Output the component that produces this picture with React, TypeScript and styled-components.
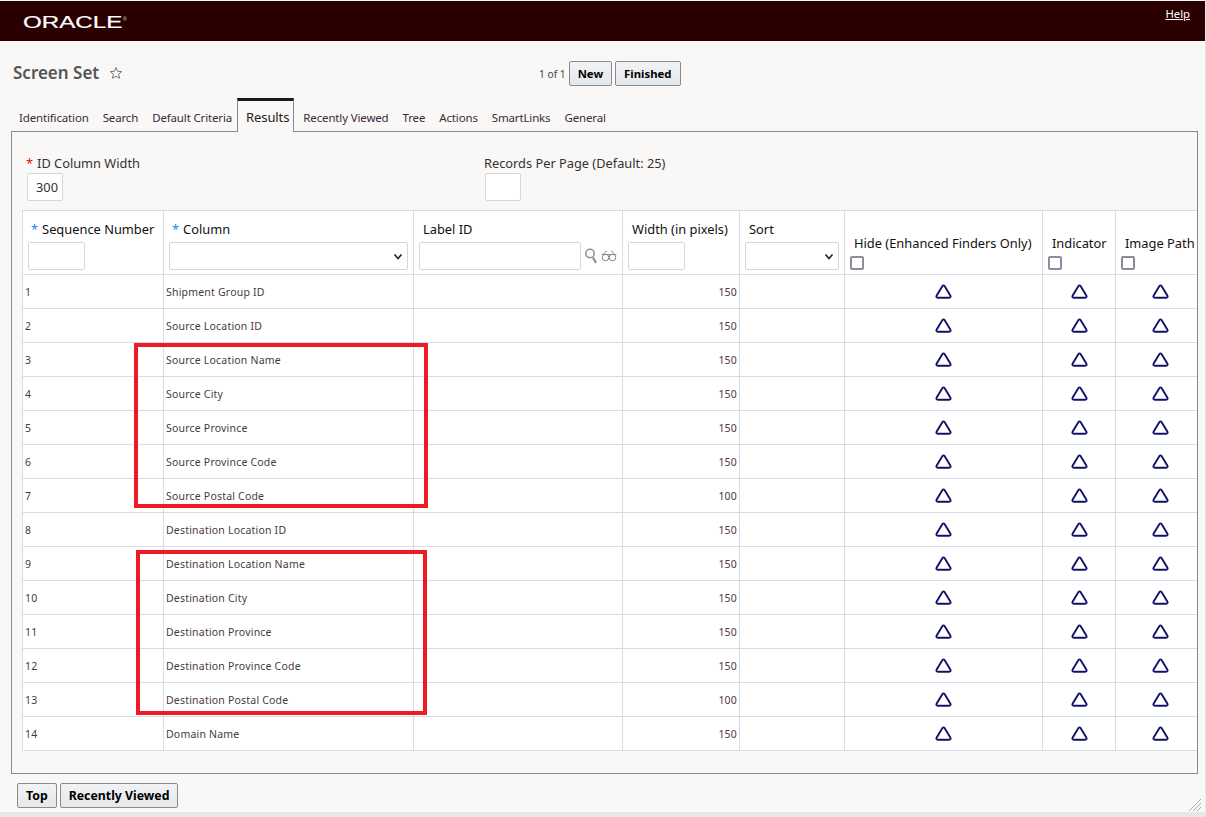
import React from "react";
import styled, { createGlobalStyle } from "styled-components";

const Global = createGlobalStyle`
  html, body { margin: 0; padding: 0; background: #fff; }
  * { box-sizing: border-box; }
`;

const Page = styled.div`
  position: relative;
  width: 1206px;
  height: 817px;
  overflow: hidden;
  padding-top: 1px;
  background: #f9f8f6;
  border-right: 1px solid #e6e6e6;
  font-family: "Noto Sans", "Open Sans", sans-serif;
  color: #222;
`;

const Header = styled.header`
  height: 40px;
  background: #2a0000;
  display: flex;
  justify-content: space-between;
  padding: 0 15px 0 23px;
`;

const Logo = styled.div`
  display: flex;
  align-items: flex-start;
  width: 110px;
  padding-top: 12px;
`;

const LogoWord = styled.span`
  display: inline-block;
  font-family: "Liberation Sans", sans-serif;
  font-size: 17px;
  line-height: 20px;
  color: #fff;
  -webkit-text-stroke: 0.2px #fff;
  transform: scaleX(1.42);
  transform-origin: left center;
`;

const LogoMark = styled.span`
  margin: 3px 0 0 30px;
  font-family: "Liberation Sans", sans-serif;
  font-size: 5px;
  line-height: 6px;
  color: #ddd;
`;

const HelpLink = styled.a`
  font-size: 11.3px;
  line-height: 16px;
  margin-top: 5px;
  color: #fff;
  text-decoration: underline;
`;

const TitleBar = styled.div`
  position: relative;
  height: 57px;
  display: flex;
  align-items: flex-start;
  padding: 21px 0 0 13px;
`;

const Title = styled.h1`
  margin: 0;
  font-size: 17px;
  line-height: 22px;
  font-weight: 600;
  color: #555;
`;

const StarIcon = styled.svg`
  margin: 4px 0 0 10px;
`;

const Pager = styled.div`
  position: absolute;
  left: 539px;
  top: 20px;
  display: flex;
  align-items: center;
  gap: 3px;
  font-size: 10.2px;
  color: #444;
`;

const Button = styled.button<{ $small?: boolean }>`
  height: 25px;
  padding: 0 8px;
  border: 1px solid #8b8b8b;
  border-radius: 2px;
  background: linear-gradient(#f1f3f5, #e4e8eb);
  font-family: "Noto Sans", "Open Sans", sans-serif;
  font-size: ${(p) => (p.$small ? "11.35px" : "12.3px")};
  font-weight: 700;
  color: #000;
`;

const TabBar = styled.nav`
  height: 33px;
  display: flex;
  align-items: flex-end;
  padding-left: 12px;
`;

const Tab = styled.div<{ $active?: boolean }>`
  height: ${(p) => (p.$active ? "34px" : "28px")};
  padding: ${(p) => (p.$active ? "0 4px 0 8px" : "0 7px")};
  display: flex;
  align-items: center;
  font-size: ${(p) => (p.$active ? "13px" : "11.5px")};
  letter-spacing: ${(p) => (p.$active ? "-0.1px" : "-0.15px")};
  color: ${(p) => (p.$active ? "#222" : "#3a2a3a")};
  position: relative;
  z-index: ${(p) => (p.$active ? 1 : 0)};
  ${(p) =>
    p.$active
      ? `
    margin: 0 2px -1px -2px;
    background: #f9f8f6;
    border-top: 3px solid #1a1a1a;
    border-left: 1px solid #8a8a8a;
    border-right: 1px solid #8a8a8a;
  `
      : ""}
`;

const Panel = styled.section`
  margin: 0 7px 0 11px;
  height: 643px;
  border: 1px solid #8a8a8a;
  padding: 21px 0 0 10px;
  overflow: hidden;
`;

const Fields = styled.div`
  display: grid;
  grid-template-columns: 458px 1fr;
  height: 57px;
  padding-left: 4px;
`;

const Field = styled.div`
  display: flex;
  flex-direction: column;
  align-items: flex-start;
`;

const FieldLabel = styled.label`
  font-size: 12.8px;
  line-height: 20px;
  color: #333;
`;

const Req = styled.span<{ $blue?: boolean }>`
  color: ${(p) => (p.$blue ? "#2a7fff" : "#e01010")};
  margin-right: 4px;
`;

const TextBox = styled.div<{ $w: number }>`
  width: ${(p) => p.$w}px;
  height: 28px;
  margin-left: 1px;
  background: #fff;
  border: 1px solid #d4d6d8;
  border-radius: 2px;
  font-size: 12.8px;
  line-height: 26px;
  padding-left: 8px;
  color: #333;
`;

const Grid = styled.table`
  table-layout: fixed;
  width: 1183px;
  border-collapse: collapse;
  background: #fff;
  font-size: 11px;
`;

const HeadCell = styled.th`
  height: 64px;
  padding: 0 5px 4px;
  vertical-align: bottom;
  text-align: left;
  font-weight: 400;
  border: 1px solid #d5dee8;
`;

const HeadText = styled.div<{ $req?: boolean }>`
  font-size: 12.85px;
  line-height: 18px;
  color: #111;
  white-space: nowrap;
  margin-bottom: 4px;
  padding-left: ${(p) => (p.$req ? "3px" : "4px")};
`;

const HeadControls = styled.div`
  display: flex;
  align-items: center;
  gap: 4px;
`;

const HeadBox = styled.div<{ $w: number }>`
  width: ${(p) => p.$w}px;
  height: 28px;
  position: relative;
  flex: none;
  background: #fff;
  border: 1px solid #d4d6d8;
  border-radius: 2px;
`;

const Chevron = styled.svg`
  position: absolute;
  right: 4px;
  top: 10px;
`;

const Check = styled.div`
  width: 14px;
  height: 14px;
  background: #fff;
  border: 2px solid #8c8c9c;
  border-radius: 2px;
`;

const Row = styled.tr`
  height: 34px;
`;

const Cell = styled.td<{ $align?: string }>`
  padding: 0 2px;
  border: 1px solid #d5dee8;
  font-size: 10.5px;
  letter-spacing: 0.2px;
  color: #4a3a40;
  text-align: ${(p) => p.$align || "left"};
`;

const Tri = styled.svg`
  display: block;
  margin: 0 auto;
`;

const Footer = styled.div`
  display: flex;
  gap: 3px;
  padding: 9px 0 0 17px;
`;

const BottomStrip = styled.div`
  position: absolute;
  left: 0;
  right: 0;
  bottom: 0;
  height: 5px;
  background: #e6e6e6;
`;

const Grip = styled.svg`
  position: absolute;
  right: 3px;
  bottom: 5px;
`;

const Mark = styled.div<{ $l: number; $t: number; $w: number; $h: number }>`
  position: absolute;
  left: ${(p) => p.$l}px;
  top: ${(p) => p.$t}px;
  width: ${(p) => p.$w}px;
  height: ${(p) => p.$h}px;
  border: 4px solid #ed1c24;
`;

const rows: [string, string][] = [
  ["Shipment Group ID", "150"],
  ["Source Location ID", "150"],
  ["Source Location Name", "150"],
  ["Source City", "150"],
  ["Source Province", "150"],
  ["Source Province Code", "150"],
  ["Source Postal Code", "100"],
  ["Destination Location ID", "150"],
  ["Destination Location Name", "150"],
  ["Destination City", "150"],
  ["Destination Province", "150"],
  ["Destination Province Code", "150"],
  ["Destination Postal Code", "100"],
  ["Domain Name", "150"],
];

const tabs = ["Identification", "Search", "Default Criteria", "Results", "Recently Viewed", "Tree", "Actions", "SmartLinks", "General"];

const Triangle = () => (
  <Tri width="17" height="15" viewBox="0 0 17 15">
    <path
      d="M7.3 2.3 Q8.5 .5 9.7 2.3 L15.3 11.4 Q16.4 13.7 14 13.7 H3 Q.6 13.7 1.7 11.4 Z"
      fill="none"
      stroke="#12126a"
      strokeWidth="1.9"
    />
  </Tri>
);

const Down = () => (
  <Chevron width="10" height="8" viewBox="0 0 10 8">
    <path d="M1.5 1.5 L5 5.5 L8.5 1.5" fill="none" stroke="#222" strokeWidth="1.6" />
  </Chevron>
);

export default function App() {
  return (
    <Page>
      <Global />
      <Header>
        <Logo>
          <LogoWord>ORACLE</LogoWord>
          <LogoMark>®</LogoMark>
        </Logo>
        <HelpLink href="#">Help</HelpLink>
      </Header>
      <TitleBar>
        <Title>Screen Set</Title>
        <StarIcon width="14" height="14" viewBox="0 0 14 14">
          <path d="M7 1.5 L8.6 5.3 L12.7 5.6 L9.6 8.3 L10.6 12.3 L7 10.2 L3.4 12.3 L4.4 8.3 L1.3 5.6 L5.4 5.3 Z" fill="none" stroke="#777" strokeWidth="1" />
        </StarIcon>
        <Pager>
          <span>1 of 1</span>
          <Button $small>New</Button>
          <Button $small>Finished</Button>
        </Pager>
      </TitleBar>
      <TabBar>
        {tabs.map((t) => (
          <Tab key={t} $active={t === "Results"}>{t}</Tab>
        ))}
      </TabBar>
      <Panel>
        <Fields>
          <Field>
            <FieldLabel><Req>*</Req>ID Column Width</FieldLabel>
            <TextBox $w={36}>300</TextBox>
          </Field>
          <Field>
            <FieldLabel>Records Per Page (Default: 25)</FieldLabel>
            <TextBox $w={36} />
          </Field>
        </Fields>
        <Grid>
          <colgroup>
            <col width="141" />
            <col width="250" />
            <col width="209" />
            <col width="117" />
            <col width="105" />
            <col width="198" />
            <col width="73" />
            <col width="90" />
          </colgroup>
          <thead>
            <tr>
              <HeadCell>
                <HeadText $req><Req $blue>*</Req>Sequence Number</HeadText>
                <HeadControls><HeadBox $w={57} /></HeadControls>
              </HeadCell>
              <HeadCell>
                <HeadText $req><Req $blue>*</Req>Column</HeadText>
                <HeadControls><HeadBox $w={239}><Down /></HeadBox></HeadControls>
              </HeadCell>
              <HeadCell>
                <HeadText>Label ID</HeadText>
                <HeadControls>
                  <HeadBox $w={162} />
                  <svg width="12" height="16" viewBox="0 0 12 16">
                    <circle cx="5" cy="5.5" r="4.2" fill="none" stroke="#8e8e8e" strokeWidth="1.5" />
                    <path d="M8 9.5 L11 15" stroke="#8e8e8e" strokeWidth="2.2" />
                  </svg>
                  <svg width="16" height="11" viewBox="0 0 16 11">
                    <path d="M0.5 3.5 H15.5 M2.5 3.5 L4.5 0.5 H6 M13.5 3.5 L11.5 0.5 H10" fill="none" stroke="#999" strokeWidth="1" />
                    <circle cx="4.5" cy="6.5" r="3.3" fill="none" stroke="#888" strokeWidth="1" />
                    <circle cx="11.5" cy="6.5" r="3.3" fill="none" stroke="#888" strokeWidth="1" />
                  </svg>
                </HeadControls>
              </HeadCell>
              <HeadCell>
                <HeadText>Width (in pixels)</HeadText>
                <HeadControls><HeadBox $w={57} /></HeadControls>
              </HeadCell>
              <HeadCell>
                <HeadText>Sort</HeadText>
                <HeadControls><HeadBox $w={94}><Down /></HeadBox></HeadControls>
              </HeadCell>
              <HeadCell>
                <HeadText>Hide (Enhanced Finders Only)</HeadText>
                <Check />
              </HeadCell>
              <HeadCell>
                <HeadText>Indicator</HeadText>
                <Check />
              </HeadCell>
              <HeadCell>
                <HeadText>Image Path</HeadText>
                <Check />
              </HeadCell>
            </tr>
          </thead>
          <tbody>
            {rows.map(([name, w], i) => (
              <Row key={name}>
                <Cell>{i + 1}</Cell>
                <Cell>{name}</Cell>
                <Cell />
                <Cell $align="right">{w}</Cell>
                <Cell />
                <Cell><Triangle /></Cell>
                <Cell><Triangle /></Cell>
                <Cell><Triangle /></Cell>
              </Row>
            ))}
          </tbody>
        </Grid>
      </Panel>
      <Footer>
        <Button>Top</Button>
        <Button>Recently Viewed</Button>
      </Footer>
      <Mark $l={134} $t={343} $w={294} $h={165} />
      <Mark $l={136} $t={550} $w={291} $h={165} />
      <BottomStrip />
      <Grip width="14" height="14" viewBox="0 0 14 14">
        <path d="M13 1 L1 13 M13 5 L5 13 M13 9 L9 13" stroke="#aaa" strokeWidth="1" />
      </Grip>
    </Page>
  );
}
